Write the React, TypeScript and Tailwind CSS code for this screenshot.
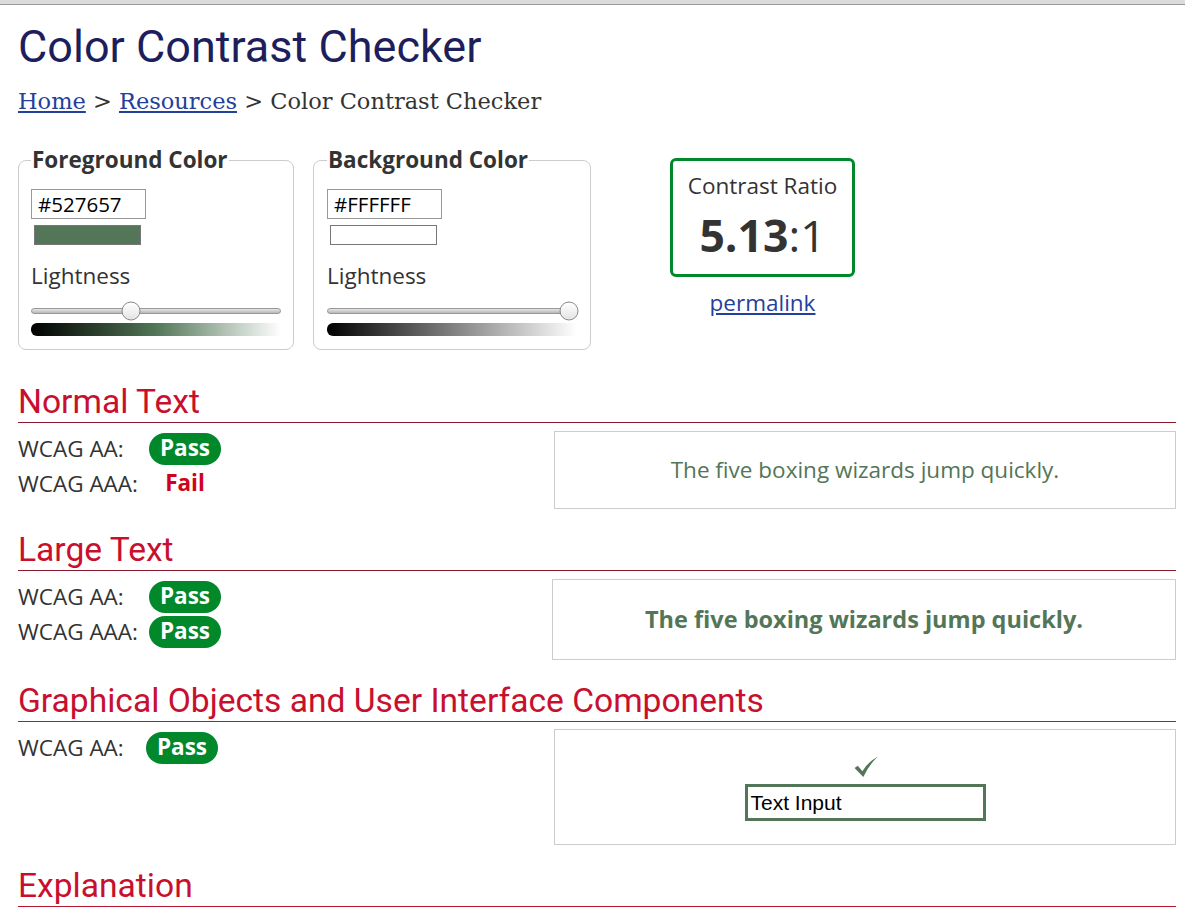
import React from "react";

const body = { fontFamily: '"Open Sans", "Liberation Sans", sans-serif' };
const head = { fontFamily: 'Roboto, "Liberation Sans", sans-serif' };

function Pass() {
  return (
    <span className="inline-flex h-[32px] w-[72px] items-center justify-center rounded-full bg-[#00882b] text-[22.5px] font-bold leading-none text-white">
      Pass
    </span>
  );
}

function Fail() {
  return (
    <span className="inline-flex h-[32px] w-[72px] items-center justify-center text-[22.5px] font-bold leading-none text-[#d0021b]">
      Fail
    </span>
  );
}

function Row({ label, w = "w-[131px]", children }: { label: string; w?: string; children: React.ReactNode }) {
  return (
    <div className="flex h-[35px] items-center">
      <span className={`${w} text-[22.5px] leading-[35px] text-[#333]`}>{label}</span>
      {children}
    </div>
  );
}

function Slider({ pos }: { pos: string }) {
  return (
    <div className="relative mt-[17px] h-[6px] rounded-full border border-[#999] bg-gradient-to-b from-[#e6e6e6] to-[#b8b8b8]">
      <span
        className="absolute top-1/2 h-[19px] w-[19px] -translate-x-1/2 -translate-y-1/2 rounded-full border border-[#888] bg-gradient-to-b from-white to-[#e4e4e4]"
        style={{ left: pos }}
      />
    </div>
  );
}

function ColorBox({
  legend,
  value,
  swatch,
  grad,
  pos,
  px,
}: {
  legend: string;
  value: string;
  swatch: string;
  grad: string;
  pos: string;
  px: string;
}) {
  return (
    <fieldset className={`rounded-[8px] border border-[#ccc] pb-[13px] pt-[14px] ${px}`}>
      <legend className="px-[1px] text-[22.5px] font-bold leading-[30px] text-[#333]">{legend}</legend>
      <div className="flex h-[30px] w-[115px] items-center border border-[#999] px-[6px] text-[20.5px] text-black">{value}</div>
      <div className={`ml-[3px] mt-[6px] h-[20px] w-[107px] border border-[#777] ${swatch}`} />
      <div className="mt-[16px] text-[22.5px] leading-[30px] text-[#333]">Lightness</div>
      <Slider pos={pos} />
      <div className={`mt-[9px] h-[13px] rounded-l-[6px] ${grad}`} />
    </fieldset>
  );
}

function Heading({ children, line, mt }: { children: React.ReactNode; line: string; mt: string }) {
  return (
    <h2 className={`${mt} border-b text-[33.6px] leading-[40px] text-[#c8102e] ${line}`} style={head}>
      {children}
    </h2>
  );
}

export default function App() {
  return (
    <div className="min-h-screen bg-white" style={body}>
      <div className="h-[5px] border-b border-[#9a9a9a] bg-[#dcdcdc]" />
      <div className="pl-[18px] pr-[9px]">
        <h1 className="mt-[15px] text-[45px] leading-[54px] text-[#1d1f5c]" style={head}>
          Color Contrast Checker
        </h1>
        <div
          className="mt-[11px] text-[22.5px] leading-[33px] text-[#333]"
          style={{ fontFamily: '"DejaVu Serif", Georgia, serif' }}
        >
          <a className="text-[#23409a] underline">Home</a> &gt; <a className="text-[#23409a] underline">Resources</a> &gt; Color
          Contrast Checker
        </div>

        <div className="mt-[27px] flex items-start">
          <div className="w-[276px]">
            <ColorBox
              legend="Foreground Color"
              value="#527657"
              swatch="bg-[#527657]"
              grad="bg-[linear-gradient(to_right,#000,#527657_50%,#fff)]"
              pos="40%"
              px="px-[12px]"
            />
          </div>
          <div className="ml-[19px] w-[278px]">
            <ColorBox
              legend="Background Color"
              value="#FFFFFF"
              swatch="bg-white"
              grad="bg-[linear-gradient(to_right,#000,#fff)]"
              pos="97%"
              px="pl-[13px] pr-[13px]"
            />
          </div>
          <div className="ml-[79px] flex w-[185px] flex-col items-center pt-[13px]">
            <div className="flex h-[119px] w-[185px] flex-col items-center rounded-[6px] border-[3px] border-[#00882b] pt-[10px]">
              <div className="text-[22.5px] leading-[30px] text-[#333]">Contrast Ratio</div>
              <div className="mt-[9px] text-[44.5px] leading-[50px] text-[#333]">
                <span className="font-bold">5.13</span>:1
              </div>
            </div>
            <a className="mt-[11px] text-[22.5px] leading-[30px] text-[#23409a] underline">permalink</a>
          </div>
        </div>

        <Heading mt="mt-[32px]" line="border-[#8a1a2c]">
          Normal Text
        </Heading>
        <div className="flex items-start pt-[8px]">
          <div className="w-[536px]">
            <Row label="WCAG AA:">
              <Pass />
            </Row>
            <Row label="WCAG AAA:">
              <Fail />
            </Row>
          </div>
          <div className="flex h-[78px] flex-1 items-center justify-center border border-[#ccc] text-[22.5px] text-[#527657]">
            The five boxing wizards jump quickly.
          </div>
        </div>

        <Heading mt="mt-[21px]" line="border-[#8a1a2c]">
          Large Text
        </Heading>
        <div className="flex items-start pt-[8px]">
          <div className="w-[534px]">
            <Row label="WCAG AA:">
              <Pass />
            </Row>
            <Row label="WCAG AAA:">
              <Pass />
            </Row>
          </div>
          <div className="flex h-[81px] flex-1 items-center justify-center border border-[#ccc] text-[23.5px] font-bold text-[#527657]">
            The five boxing wizards jump quickly.
          </div>
        </div>

        <Heading mt="mt-[21px]" line="border-[#c8102e]">
          Graphical Objects and User Interface Components
        </Heading>
        <div className="flex items-start pt-[7px]">
          <div className="w-[536px] pt-[1px]">
            <Row label="WCAG AA:" w="w-[128px]">
              <Pass />
            </Row>
          </div>
          <div className="flex h-[116px] flex-1 flex-col items-center border border-[#ccc] pt-[26px]">
            <svg width="25" height="22" viewBox="0 0 26 24" className="ml-[2px]">
              <path d="M0 13 L3.5 10.5 L8.5 16.5 Q14.5 6.5 25.5 0.5 Q16 9 9.5 23 Z" fill="#527657" />
            </svg>
            <div
              className="mt-[6px] flex h-[37px] w-[241px] items-center border-[3px] border-[#527657] px-[3px] text-[21px] text-black"
              style={{ fontFamily: '"Liberation Sans", Arial, sans-serif' }}
            >
              Text Input
            </div>
          </div>
        </div>

        <Heading mt="mt-[21px]" line="border-[#b5152e]">
          Explanation
        </Heading>
      </div>
    </div>
  );
}
